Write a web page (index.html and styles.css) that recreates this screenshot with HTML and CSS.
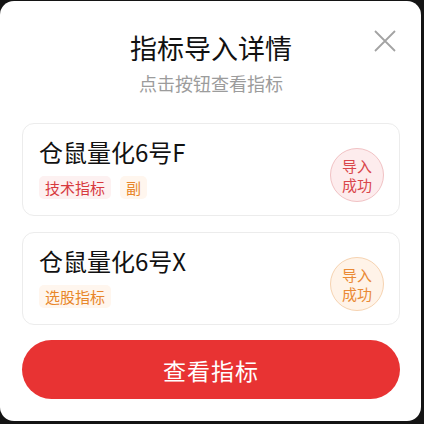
FILE: index.html
```html
<!DOCTYPE html>
<html>
<head>
    <meta charset="utf-8" />
    <link rel="stylesheet" href="styles.css">
    <title>指标导入详情</title>
</head>

<body>
    <div class="modal">
        <div class="head">
            <h1 class="title">指标导入详情</h1>
            <p class="subtitle">点击按钮查看指标</p>
            <button type="button" class="close" aria-label="关闭">
                <svg width="22" height="22" viewBox="0 0 22 22">
                    <path d="M1 1 L21 21 M21 1 L1 21" stroke="#a3a3a3" stroke-width="1.8" fill="none" />
                </svg>
            </button>
        </div>

        <div class="list">
            <div class="card">
                <div class="info">
                    <div class="name">仓鼠量化6号F</div>
                    <div class="tags">
                        <span class="tag red">技术指标</span>
                        <span class="tag orange">副</span>
                    </div>
                </div>
                <div class="stamp red">导入<br>成功</div>
            </div>
            <div class="card">
                <div class="info">
                    <div class="name">仓鼠量化6号X</div>
                    <div class="tags">
                        <span class="tag orange">选股指标</span>
                    </div>
                </div>
                <div class="stamp orange">导入<br>成功</div>
            </div>
        </div>

        <button type="button" class="main-button">查看指标</button>
    </div>
</body>
</html>
```

FILE: styles.css
```css
 * {
     box-sizing: border-box;
     font-family: "Noto Sans CJK SC", "Noto Sans", sans-serif;
 }
 body {
     margin: 0;
     background: #141414;
     height: 424px;
     overflow: hidden;
 }
 .modal {
     margin-top: 1px;
     width: 421px;
     height: 420px;
     background: #fff;
     border-radius: 14px;
     padding: 0 21px 22px 22px;
     display: flex;
     flex-direction: column;
 }
 .head {
     position: relative;
     text-align: center;
     padding-top: 30px;
 }
 .title {
     margin: 0;
     font-size: 27px;
     line-height: 34px;
     font-weight: 400;
     color: #111;
 }
 .subtitle {
     margin: 6px 0 0 0;
     font-size: 18px;
     line-height: 24px;
     color: #9c9c9c;
 }
 .close {
     position: absolute;
     top: 29px;
     right: 4px;
     width: 22px;
     height: 22px;
     padding: 0;
     border: none;
     background: none;
 }
 .close svg {
     display: block;
 }
 .list {
     margin-top: 28px;
     display: flex;
     flex-direction: column;
     gap: 16px;
 }
 .card {
     height: 93px;
     border: 1px solid #ececec;
     border-radius: 12px;
     padding: 0 15px 4px 16px;
     display: flex;
     align-items: center;
     justify-content: space-between;
 }
 .name {
     font-size: 24px;
     line-height: 30px;
     color: #111;
 }
 .tags {
     margin-top: 9px;
     display: flex;
     gap: 9px;
 }
 .tag {
     font-size: 15px;
     line-height: 23px;
     padding: 0 6px;
     border-radius: 5px;
 }
 .tag.red {
     color: #d7393e;
     background: #fdf1f1;
 }
 .tag.orange {
     color: #e8862a;
     background: #fff6ee;
 }
 .stamp {
     width: 54px;
     height: 54px;
     margin-top: 14px;
     border-radius: 50%;
     font-size: 15px;
     line-height: 19px;
     display: flex;
     align-items: center;
     justify-content: center;
     text-align: center;
 }
 .stamp.red {
     color: #d9464b;
     background: #fdeced;
     border: 1px solid #f1c2c4;
 }
 .stamp.orange {
     color: #ea8a35;
     background: #fff3e8;
     border: 1px solid #f6d3b1;
 }
 .main-button {
     margin-top: 15px;
     height: 60px;
     border: none;
     border-radius: 30px;
     background: #e83333;
     color: #fff;
     font-size: 23px;
     letter-spacing: 1px;
 }
```
